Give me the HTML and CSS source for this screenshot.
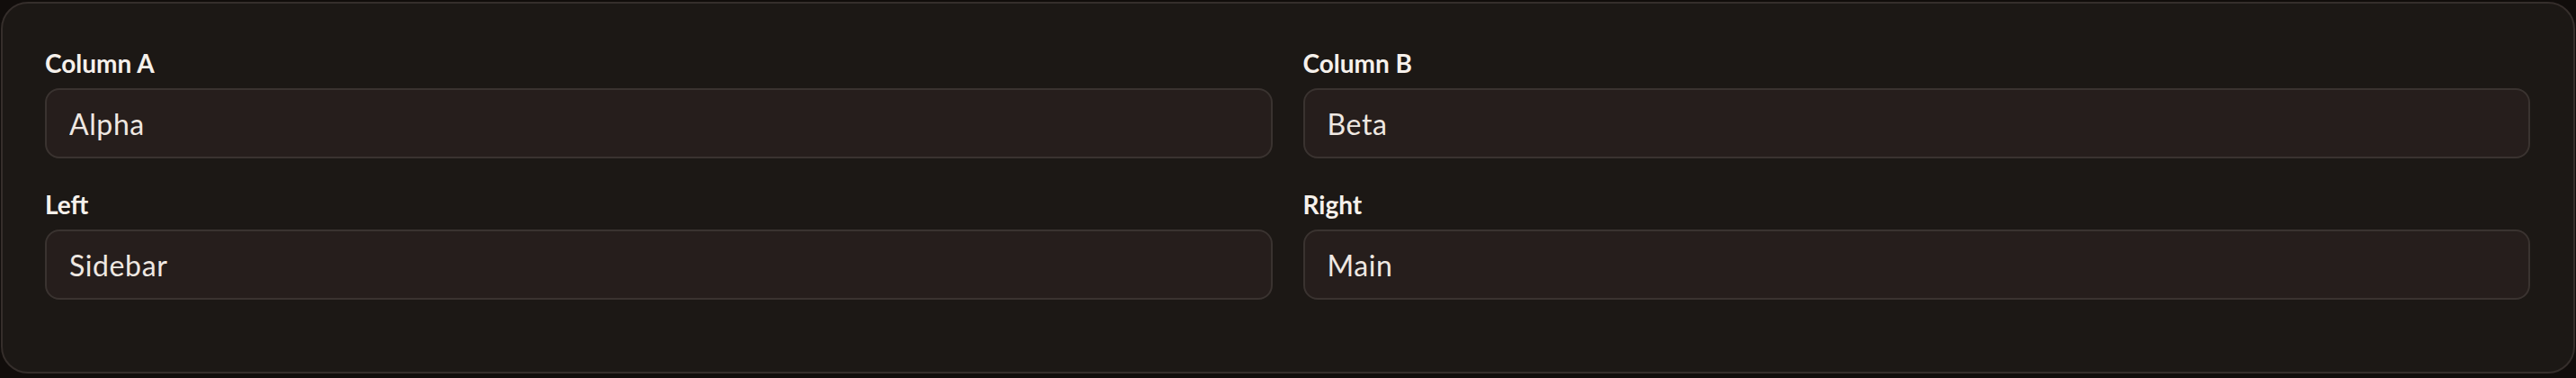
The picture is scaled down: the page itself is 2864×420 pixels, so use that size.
FILE: index.html
```html
<!DOCTYPE html>
<html lang="en">

<head>
    <meta charset="UTF-8">
    <meta name="viewport" content="width=device-width, initial-scale=1.0">
    <title>Columns</title>

    <link rel="stylesheet" href="styles.css">
</head>

<body>
    <div class="card">
        <div class="grid">
            <div class="field">
                <label for="colA">Column A</label>
                <input id="colA" type="text" value="Alpha">
            </div>
            <div class="field">
                <label for="colB">Column B</label>
                <input id="colB" type="text" value="Beta">
            </div>
            <div class="field">
                <label for="left">Left</label>
                <input id="left" type="text" value="Sidebar">
            </div>
            <div class="field">
                <label for="right">Right</label>
                <input id="right" type="text" value="Main">
            </div>
        </div>
    </div>
</body>

</html>
```

FILE: styles.css
```css
* {
    box-sizing: border-box;
}

body {
    margin: 0;
    padding: 2px 1px 3px 1px;
    background-color: #110d0b;
    font-family: "Lato", "Noto Sans", sans-serif;
}

.card {
    background-color: #1c1815;
    border: 2px solid #352e2b;
    border-radius: 30px;
    padding: 46px 48px 80px 47px;
}

.grid {
    display: grid;
    grid-template-columns: 1fr 1fr;
    column-gap: 34px;
    row-gap: 31px;
}

.field {
    display: flex;
    flex-direction: column;
}

label {
    color: #f6f1ec;
    font-size: 28px;
    font-weight: 700;
    line-height: 40px;
    margin-bottom: 8px;
}

input {
    width: 100%;
    height: 78px;
    padding: 0 25px;
    background-color: #261e1c;
    border: 2px solid #3a3330;
    border-radius: 16px;
    color: #efe8e2;
    font-family: inherit;
    font-size: 32px;
    letter-spacing: 0.6px;
    outline: none;
}
```
